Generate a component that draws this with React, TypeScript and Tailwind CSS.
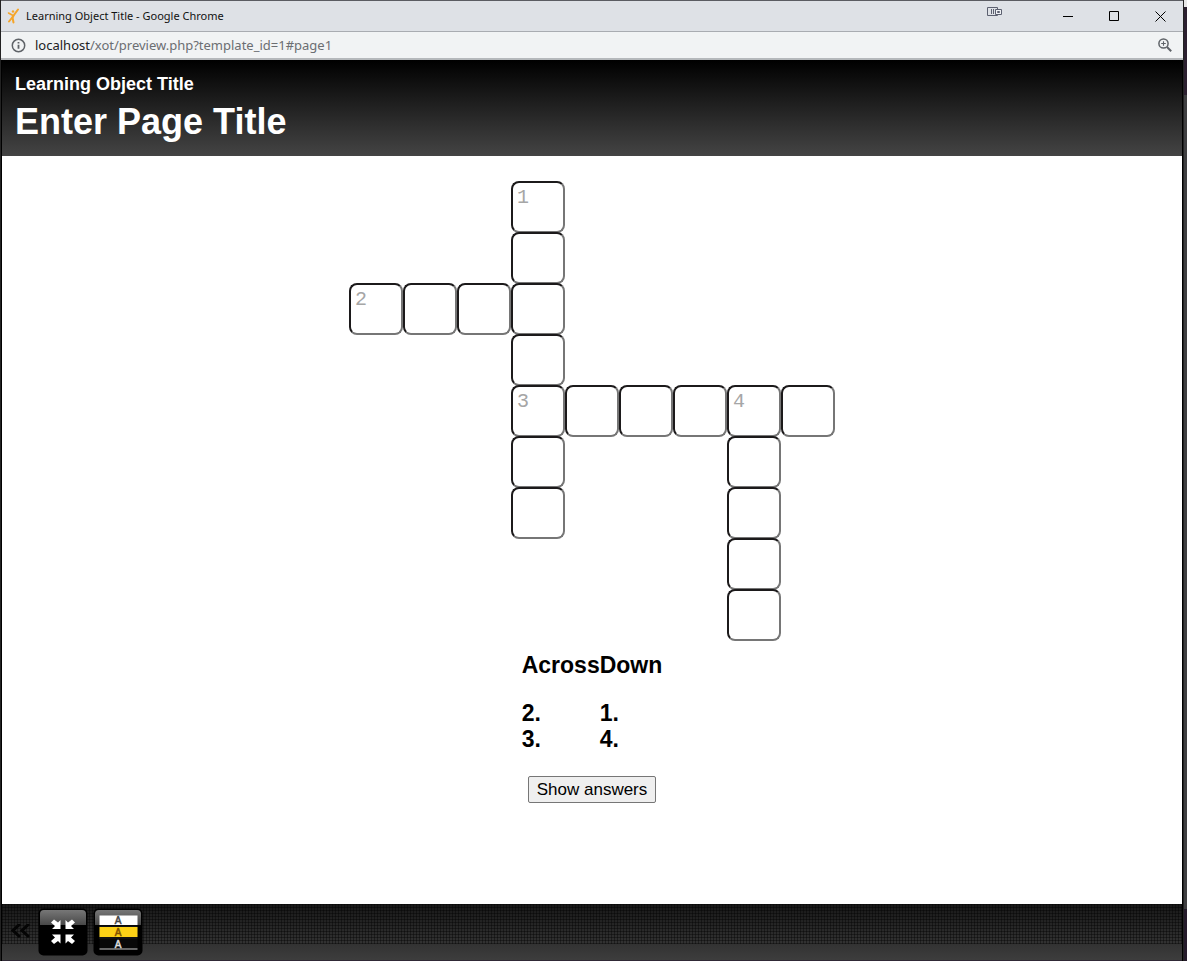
const layout = [
  '...1.....',
  '...x.....',
  '2xxx.....',
  '...x.....',
  '...3xxx4x',
  '...x...x.',
  '...x...x.',
  '.......x.',
  '.......x.',
];

function Cell({ value, row, col }: { value: string; row: number; col: number }) {
  if (value === '.') return <div />;
  return (
    <label className="relative block">
      <input
        aria-label={`Row ${row + 1}, column ${col + 1}`}
        maxLength={1}
        className="block h-[52px] w-full rounded-lg border-2 border-t-[#1c1a1b] border-r-[#767676] border-b-[#767676] border-l-[#1c1a1b] bg-white text-center text-xl outline-none"
      />
      {value !== 'x' && (
        <span className="pointer-events-none absolute top-1 left-1.5 font-['Liberation_Mono',monospace] text-[20px] leading-[26px] text-[#a6a6a6]">
          {value}
        </span>
      )}
    </label>
  );
}

function XerteIcon() {
  return (
    <svg width="14" height="16" viewBox="0 0 14 16" fill="none" stroke="#f5a52a" strokeLinecap="round" aria-hidden="true">
      <path d="M13 1.500 9 7 7.500 9.500 8.500 14.500" strokeWidth="2" />
      <path d="M8 8.500 4 13.500" strokeWidth="2" />
      <path d="M3.500 5 8 7.500" strokeWidth="1.600" />
      <circle cx="8" cy="3.500" r="1.200" fill="#f5a52a" stroke="none" />
    </svg>
  );
}

function TitleBar() {
  return (
    <div className="flex h-8 items-center border-t border-b border-t-[#5b5c62] border-b-[#a9acb1] bg-[#dee1e6] pl-1">
      <XerteIcon />
      <span className="ml-[7px] flex-1 font-['Noto_Sans',sans-serif] text-[11px] text-[#111111]">
        Learning Object Title - Google Chrome
      </span>
      <svg className="mr-[42px] mb-2" width="16" height="10" viewBox="0 0 16 10" fill="none" stroke="#5c6070" aria-hidden="true">
        <path d="M.5.5h10v8H.5zM4.5 2v5M6.5 2v5" />
        <path d="M8.5 2.5h6v5h-6z" fill="#eef0f4" />
        <path d="M10.5 4.5h2v1h-2z" />
      </svg>
      <button aria-label="Minimize" className="flex h-full w-[46px] items-center justify-center">
        <svg width="10" height="11" viewBox="0 0 10 11" stroke="#000" aria-hidden="true"><path d="M0 5.5h10" /></svg>
      </button>
      <button aria-label="Maximize" className="flex h-full w-[46px] items-center justify-center">
        <svg width="10" height="10" viewBox="0 0 10 10" fill="none" stroke="#000" aria-hidden="true"><path d="M.5.5h9v9h-9z" /></svg>
      </button>
      <button aria-label="Close" className="flex h-full w-[46px] items-center justify-center">
        <svg width="11" height="11" viewBox="0 0 11 11" stroke="#000" aria-hidden="true"><path d="m.5.5 10 10m0-10-10 10" /></svg>
      </button>
    </div>
  );
}

function AddressBar() {
  return (
    <div className="flex h-7 items-center border-b-2 border-[#b5b8bb] bg-[#f1f3f4] pr-[11px] pl-2.5">
      <svg width="15" height="15" viewBox="0 0 15 15" fill="none" stroke="#5f6368" strokeWidth="1.5" aria-hidden="true">
        <circle cx="7.500" cy="7.500" r="6.200" />
        <path d="M7.5 6.7v4M7.5 4v1.5" strokeWidth="1.800" />
      </svg>
      <span className="ml-[9px] flex-1 font-['Noto_Sans',sans-serif] text-[13px] leading-5 text-[#6b6e72]">
        <span className="text-[#202124]">localhost</span>/xot/preview.php?template_id=1#page1
      </span>
      <button aria-label="Zoom">
        <svg width="14" height="14" viewBox="0 0 14 14" fill="none" stroke="#5f6368" strokeWidth="1.5" aria-hidden="true">
          <circle cx="5.500" cy="5.500" r="4.600" />
          <path d="m9 9 4.2 4.2" strokeWidth="2" />
          <path d="M5.5 3.2v4.6M3.2 5.5h4.6" strokeWidth="1.100" />
        </svg>
      </button>
    </div>
  );
}

const arrow = 'M22.500 21V12l-2.500 2.500-4-3-3 3 4 3.500-3 3z';

function Toolbar() {
  return (
    <footer className="flex h-[57px] items-center gap-[5px] border-b border-[#302936] bg-[repeating-linear-gradient(90deg,#00000060_0_1px,transparent_1px_3px),repeating-linear-gradient(0deg,#00000060_0_1px,transparent_1px_3px),linear-gradient(#181818,#3d3d3d)] bg-[length:100%_40px,100%_40px,100%_100%] bg-no-repeat pl-[7px]">
      <button aria-label="Previous controls" className="flex w-6 justify-center">
        <svg width="20" height="16" viewBox="0 0 20 16" fill="none" stroke="#050505" strokeWidth="3" aria-hidden="true">
          <path d="m9 0-7 6.500 7 6.500M18 0 11 6.500l7 6.500" />
        </svg>
      </button>
      <button aria-label="Fit to window">
        <svg width="50" height="48" viewBox="0 0 50 48" aria-hidden="true">
          <defs>
            <linearGradient id="gloss" x1="0" y1="0" x2="0" y2="1">
              <stop offset="0" stopColor="#777" />
              <stop offset="1" stopColor="#484848" />
            </linearGradient>
          </defs>
          <rect x=".5" y=".5" width="49" height="47" rx="5" fill="#000" />
          <path d="M2 17V6q0-4 4-4h38q4 0 4 4v11z" fill="url(#gloss)" />
          <g fill="#fff">
            <path d={arrow} />
            <path d={arrow} transform="matrix(-1 0 0 1 50 0)" />
            <path d={arrow} transform="matrix(1 0 0 -1 0 47.500)" />
            <path d={arrow} transform="matrix(-1 0 0 -1 50 47.500)" />
          </g>
        </svg>
      </button>
      <button aria-label="Change colours">
        <svg width="50" height="48" viewBox="0 0 50 48" aria-hidden="true">
          <rect x=".5" y=".5" width="49" height="47" rx="5" fill="#000" />
          <path d="M2 17V6q0-4 4-4h38q4 0 4 4v11z" fill="url(#gloss)" />
          <path d="M6 17.500h38.500v13.500H6z" fill="#111" />
          <path d="M6.500 7.500h38v9.500h-38z" fill="#fff" />
          <path d="M6.500 19h38v10h-38z" fill="#fcd116" />
          <path d="M6.500 31h38v10h-38z" fill="#080808" />
          <path d="M6.500 41h38" stroke="#ccc" />
          <g fontFamily="Liberation Sans, sans-serif" fontSize="10" textAnchor="middle" strokeWidth=".5">
            <text x="25" y="16" fill="#444" stroke="#444">A</text>
            <text x="25" y="28" fill="#805000" stroke="#805000">A</text>
            <text x="25" y="40" fill="#ddd" stroke="#ddd">A</text>
          </g>
        </svg>
      </button>
    </footer>
  );
}

export default function App() {
  return (
    <div className="flex min-h-screen bg-[#3b3b3e] font-['Liberation_Sans',Arial,sans-serif] text-black">
      <div className="flex flex-1 flex-col border-r border-l border-[#222222]">
        <TitleBar />
        <AddressBar />
        <div className="flex flex-1 flex-col border-r border-l border-black bg-white">
          <header className="h-24 bg-[linear-gradient(#000000,#444444)] px-[13px] pt-3 font-bold text-white">
            <h2 className="text-lg leading-6">Learning Object Title</h2>
            <h1 className="mt-1 text-4xl leading-[44px]">Enter Page Title</h1>
          </header>
          <main className="flex flex-1 flex-col items-center pt-[25px]">
            <div className="grid auto-rows-[51px] grid-cols-[repeat(9,54px)]">
              {layout.flatMap((line, row) =>
                line.split('').map((value, col) => <Cell key={`${row}-${col}`} value={value} row={row} col={col} />),
              )}
            </div>
            <table className="mt-3 text-left text-[23px] leading-[26px] font-bold">
              <thead>
                <tr>
                  <th className="p-0 pb-[22px]">Across</th>
                  <th className="p-0 pb-[22px]">Down</th>
                </tr>
              </thead>
              <tbody>
                <tr><td className="p-0">2.</td><td className="p-0">1.</td></tr>
                <tr><td className="p-0">3.</td><td className="p-0">4.</td></tr>
              </tbody>
            </table>
            <button className="mt-6 rounded-xs border border-[#767676] bg-[#efefef] px-2 text-[17px] leading-[25px]">
              Show answers
            </button>
          </main>
          <Toolbar />
        </div>
      </div>
      <div className="flex w-[3px] flex-col">
        <div className="h-[7px] bg-[#e8e8e8]" />
        <div className="h-[88px] bg-[#2c2030]" />
        <div className="flex-1 bg-[#3f3f41]" />
        <div className="h-[52px] bg-[#251b2b]" />
      </div>
    </div>
  );
}
